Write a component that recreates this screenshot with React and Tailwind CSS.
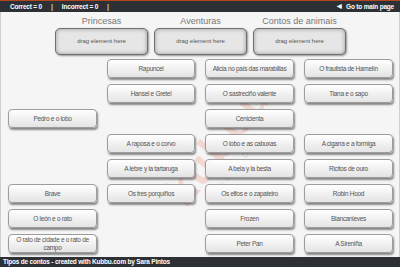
import React from "react";

const cells = [
  [null, "Rapuncel", "Alicia no país das marabillas", "O frautista de Hamelín"],
  [null, "Hansel e Gretel", "O sastreciño valente", "Tiana e o sapo"],
  ["Pedro e o lobo", null, "Cenicienta", null],
  [null, "A raposa e o corvo", "O lobo e as cabuxas", "A cigarra e a formiga"],
  [null, "A lebre y la tartaruga", "A bela y la besta", "Ricitos de ouro"],
  ["Brave", "Os tres porquiños", "Os elfos e o zapateiro", "Robin Hood"],
  ["O león e o rato", null, "Frozen", "Blancanieves"],
  ["O rato de cidade e o rato de campo", null, "Peter Pan", "A Sireniña"],
];

const groups = ["Princesas", "Aventuras", "Contos de animais"];

const Card = ({ text }) => (
  <div className="flex items-center justify-center h-[19px] rounded-[4px] border border-[#9c9c9c] bg-gradient-to-b from-white to-[#e4e4e4] shadow-[1px_2px_2px_rgba(0,0,0,0.45)] px-[4px] text-center text-[6.5px] leading-[8px] tracking-[-0.3px] text-[#555]">
    {text}
  </div>
);

const App = () => {
  return (
    <div className="flex flex-col w-[400px] h-[267px] overflow-hidden bg-[#f5f5f5] font-['Liberation_Sans',Arial,sans-serif]">
      {/* Top bar */}
      <div className="flex items-center h-[12px] bg-[#2d3135] border-t border-[#b3461f] text-white text-[6.5px] font-bold tracking-[-0.2px] pl-[10px] pr-[6px]">
        <span>Correct = 0</span>
        <span className="ml-[9px] font-normal text-[8px]">|</span>
        <span className="ml-[9px]">Incorrect = 0</span>
        <span className="ml-[9px] font-normal text-[8px]">|</span>
        <span className="ml-auto flex items-center gap-[4px]">
          <span className="text-[6px]">◀</span>
          Go to main page
        </span>
      </div>

      {/* Content */}
      <div className="relative flex-1 border-x border-[#cfcfcf]">
        {/* watermark */}
        <div className="absolute left-[150px] top-[108px] -rotate-[52deg] pointer-events-none select-none opacity-60">
          <div className="text-[44px] font-bold leading-none text-[#f0c6bd] tracking-[2px]">kubbu</div>
          <div className="text-[11px] leading-none text-[#d8d8d8] ml-[20px] tracking-[3px]">education</div>
        </div>

        <div className="relative flex justify-center gap-[6px] pt-[4px] pl-[1px]">
          {groups.map((g) => (
            <div key={g} className="flex flex-col items-center w-[93px]">
              <div className="h-[11px] text-[9px] leading-[11px] text-[#777]">{g}</div>
              <div className="mt-[1px] flex items-center justify-center w-full h-[27px] rounded-[5px] border border-[#707070] bg-[#e6e6e6] shadow-[inset_0_0_4px_rgba(0,0,0,0.35),1px_1px_2px_rgba(0,0,0,0.4)] text-[6px] text-[#555]">
                drag element here
              </div>
            </div>
          ))}
        </div>

        <div className="relative grid grid-cols-[89px_88px_89px_89px] gap-x-[10px] gap-y-[6px] auto-rows-[19px] pl-[7px] pt-[4px]">
          {cells.flat().map((c, i) =>
            c ? <Card key={i} text={c} /> : <div key={i} />
          )}
        </div>
      </div>

      {/* Footer */}
      <div className="flex items-center h-[10px] bg-[#2d3135] text-white text-[6.5px] font-bold tracking-[-0.2px] pl-[3px]">
        Tipos de contos - created with Kubbu.com by Sara Pintos
      </div>
    </div>
  );
};

export default App;
